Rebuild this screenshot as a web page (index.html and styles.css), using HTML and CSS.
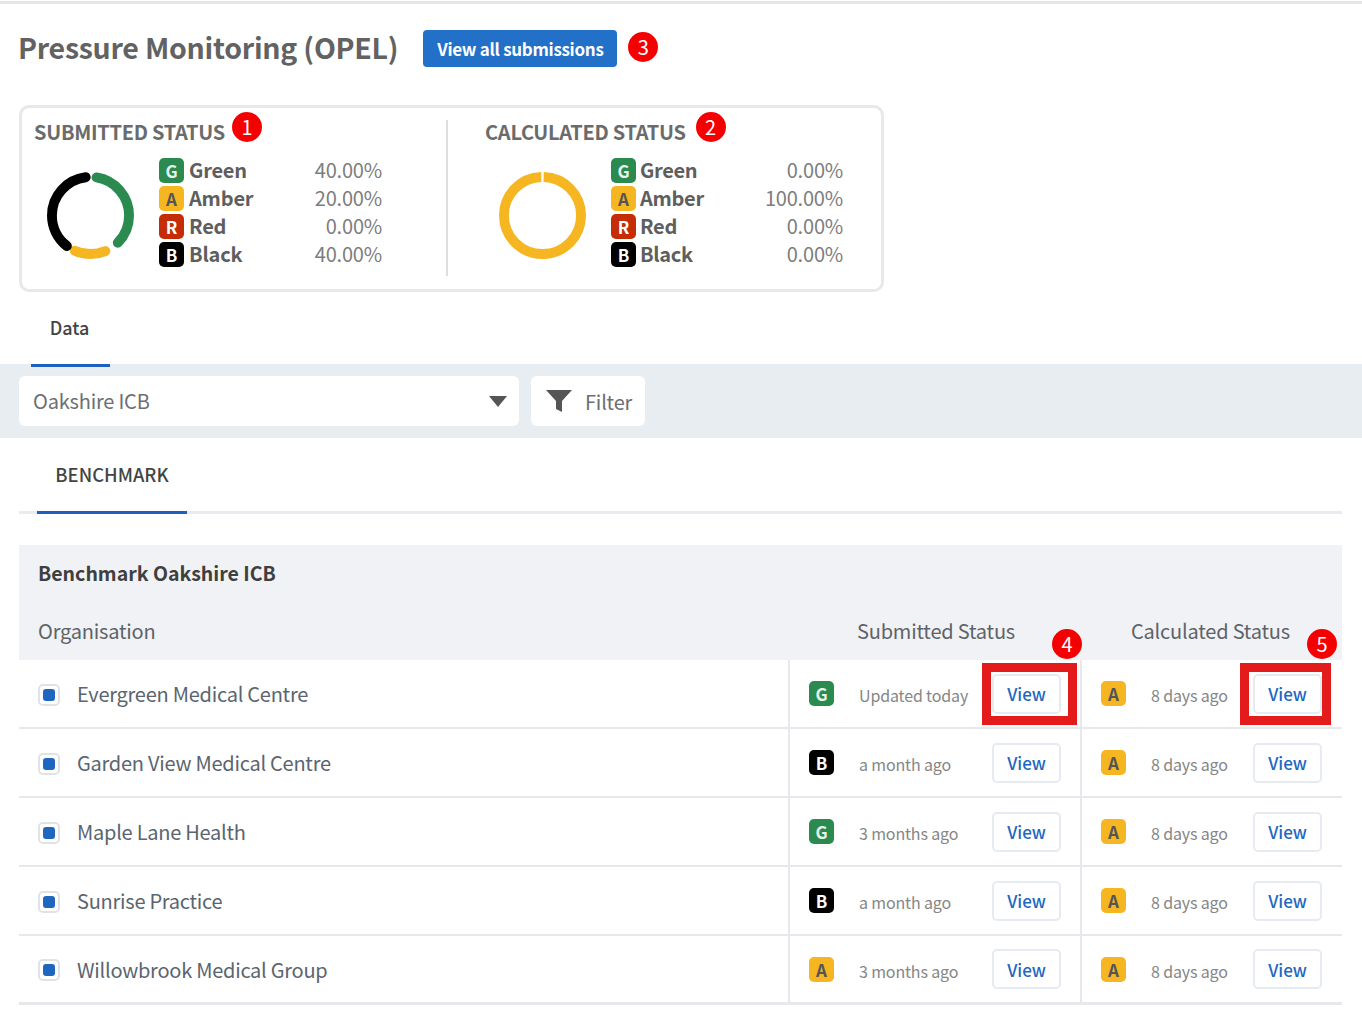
FILE: index.html
```html
<!DOCTYPE html>
<html lang="en">
<head>
<meta charset="utf-8">
<title>Pressure Monitoring (OPEL)</title>
<link rel="stylesheet" href="styles.css">
</head>
<body>
<main class="page">
  <header class="head">
    <h1 class="title">Pressure Monitoring (OPEL)</h1>
    <a class="primary">View all submissions</a>
    <span class="pin">3</span>
  </header>

  <section class="card">
    <div class="stat stat-a">
      <h2 class="stat-title">SUBMITTED STATUS<span class="pin pin-title">1</span></h2>
      <div class="stat-body">
        <svg class="donut" viewBox="0 0 88 88">
          <g transform="rotate(-90 44 44)" fill="none" stroke-width="10" stroke-linecap="round">
            <circle cx="44" cy="44" r="39" pathLength="100" stroke="#2a8a4f" stroke-dasharray="35 65" stroke-dashoffset="-2.5"/>
            <circle cx="44" cy="44" r="39" pathLength="100" stroke="#f6b622" stroke-dasharray="13 87" stroke-dashoffset="-43.7"/>
            <circle cx="44" cy="44" r="39" pathLength="100" stroke="#000" stroke-dasharray="37.5 62.5" stroke-dashoffset="-60.5"/>
          </g>
        </svg>
        <ul class="legend legend-a">
          <li><span class="rag g">G</span><b>Green</b><i>40.00%</i></li>
          <li><span class="rag a">A</span><b>Amber</b><i>20.00%</i></li>
          <li><span class="rag r">R</span><b>Red</b><i>0.00%</i></li>
          <li><span class="rag k">B</span><b>Black</b><i>40.00%</i></li>
        </ul>
      </div>
    </div>
    <div class="stat stat-b">
      <h2 class="stat-title">CALCULATED STATUS<span class="pin pin-title">2</span></h2>
      <div class="stat-body">
        <svg class="donut" viewBox="0 0 88 88">
          <g transform="rotate(-90 44 44)" fill="none" stroke-width="10">
            <circle cx="44" cy="44" r="39" pathLength="100" stroke="#f6b622" stroke-dasharray="99 1" stroke-dashoffset="-0.5"/>
          </g>
        </svg>
        <ul class="legend legend-b">
          <li><span class="rag g">G</span><b>Green</b><i>0.00%</i></li>
          <li><span class="rag a">A</span><b>Amber</b><i>100.00%</i></li>
          <li><span class="rag r">R</span><b>Red</b><i>0.00%</i></li>
          <li><span class="rag k">B</span><b>Black</b><i>0.00%</i></li>
        </ul>
      </div>
    </div>
  </section>

  <nav class="tabs"><a class="tab">Data</a></nav>

  <div class="toolbar">
    <div class="select">
      <span>Oakshire ICB</span>
      <svg class="caret" viewBox="0 0 18 12"><path d="M0 1h18L9 12z"/></svg>
    </div>
    <div class="filter">
      <svg class="funnel" viewBox="0 0 26 22"><path d="M0 0h26L16 11v11l-6-3v-8z"/></svg>
      <span>Filter</span>
    </div>
  </div>

  <div class="subtabs"><a class="subtab">BENCHMARK</a></div>

  <section class="panel">
    <div class="panel-head">
      <h3 class="panel-title">Benchmark Oakshire ICB</h3>
      <div class="cols">
        <div class="col-org">Organisation</div>
        <div class="col-sub">Submitted Status</div>
        <div class="col-calc">Calculated Status</div>
      </div>
    </div>

    <div class="row">
      <div class="org"><span class="check"></span>Evergreen Medical Centre</div>
      <div class="cell cell-sub"><span class="rag g">G</span><span class="when">Updated today</span><span class="view-wrap"><a class="view">View</a><span class="mark mark-a"><span class="pin pin-mark">4</span></span></span></div>
      <div class="cell cell-calc"><span class="rag a">A</span><span class="when">8 days ago</span><span class="view-wrap"><a class="view">View</a><span class="mark mark-b"><span class="pin pin-mark">5</span></span></span></div>
    </div>
    <div class="row">
      <div class="org"><span class="check"></span>Garden View Medical Centre</div>
      <div class="cell cell-sub"><span class="rag k">B</span><span class="when">a month ago</span><a class="view">View</a></div>
      <div class="cell cell-calc"><span class="rag a">A</span><span class="when">8 days ago</span><a class="view">View</a></div>
    </div>
    <div class="row">
      <div class="org"><span class="check"></span>Maple Lane Health</div>
      <div class="cell cell-sub"><span class="rag g">G</span><span class="when">3 months ago</span><a class="view">View</a></div>
      <div class="cell cell-calc"><span class="rag a">A</span><span class="when">8 days ago</span><a class="view">View</a></div>
    </div>
    <div class="row">
      <div class="org"><span class="check"></span>Sunrise Practice</div>
      <div class="cell cell-sub"><span class="rag k">B</span><span class="when">a month ago</span><a class="view">View</a></div>
      <div class="cell cell-calc"><span class="rag a">A</span><span class="when">8 days ago</span><a class="view">View</a></div>
    </div>
    <div class="row row-last">
      <div class="org"><span class="check"></span>Willowbrook Medical Group</div>
      <div class="cell cell-sub"><span class="rag a">A</span><span class="when">3 months ago</span><a class="view">View</a></div>
      <div class="cell cell-calc"><span class="rag a">A</span><span class="when">8 days ago</span><a class="view">View</a></div>
    </div>
  </section>
</main>
</body>
</html>
```
FILE: styles.css
```css
* { box-sizing: border-box; }
html, body { margin: 0; padding: 0; background: #fff; }
body {
  font-family: "Noto Sans CJK SC", "Noto Sans", sans-serif;
  color: #5f6368;
  overflow: hidden;
}
.page { border-top: 3px solid #e6e6e6; margin-top: 1px; height: 1017px; }

.pin {
  display: inline-flex; align-items: center; justify-content: center;
  width: 30px; height: 30px; border-radius: 50%;
  background: #f50000; color: #fff;
  font-size: 20px; font-weight: 400; line-height: 1;
}

.head { display: flex; align-items: center; height: 87px; padding: 0 19px 0 18px; }
.title { margin: -2px 0 0; font-size: 28.5px; line-height: 40px; font-weight: 700; color: #626262; letter-spacing: -.25px; white-space: nowrap; }
.primary {
  margin: 2px 0 0 25px; width: 194px; height: 37px; display: flex; align-items: center; justify-content: center;
  background: #2270c8; color: #fff; border-radius: 4px;
  font-size: 17px; font-weight: 700; letter-spacing: -.3px;
}
.head .pin { margin: -2px 0 0 11px; }

.card {
  margin: 14px 0 0 19px; width: 865px; height: 187px;
  border: 3px solid #e8e8e8; border-radius: 10px;
  display: flex; padding-top: 12px;
}
.stat { height: 156px; }
.stat-a { width: 426px; padding-left: 12px; border-right: 2px solid #dedede; }
.stat-b { flex: 1; padding-left: 37px; }
.stat-title {
  margin: -1px 0 0; height: 26px; font-size: 20px; line-height: 26px; font-weight: 700; color: #6b6b6b;
  letter-spacing: -.28px;
  display: flex; align-items: center;
}
.pin-title { margin-left: 7px; margin-top: -10px; letter-spacing: 0; }
.stat-b .pin-title { margin-left: 10px; }
.stat-body { display: flex; margin-top: 11px; }
.donut { width: 87px; height: 87px; margin: 16px 0 0 13px; flex: none; }
.stat-b .donut { margin-left: 14px; }
.legend { list-style: none; margin: 0 0 0 25px; padding: 0; }
.legend li { display: flex; align-items: center; height: 28px; font-size: 20px; }
.legend b { font-weight: 700; color: #5e5e5e; margin: 0 0 2px 5px; letter-spacing: -.2px; }
.legend-b b { margin-left: 4px; letter-spacing: -.3px; }
.legend i { font-style: normal; color: #7d7d7d; margin: 0 0 2px auto; letter-spacing: -.2px; }
.legend-a { width: 223px; }
.legend-b { width: 232px; }

.rag {
  display: inline-flex; align-items: center; justify-content: center; flex: none;
  width: 25px; height: 25px; border-radius: 5px;
  font-size: 17px; font-weight: 700; line-height: 1; color: #fff;
}
.rag.g { background: #2a8a4f; color: #e6f3ea; }
.rag.a { background: #f6b622; color: #555; }
.rag.r { background: #c42d06; }
.rag.k { background: #000; }

.tabs { height: 72px; padding-left: 31px; }
.tab {
  display: flex; justify-content: center; width: 79px; height: 75px; padding: 20px 2px 0 0;
  font-size: 18px; line-height: 30px; font-weight: 500; color: #444;
  border-bottom: 3px solid #1f5fbf; position: relative; z-index: 1;
}

.toolbar {
  height: 74px; background: #e8edf1; padding: 12px 19px;
  display: flex; gap: 12px;
}
.select, .filter { background: #fff; border-radius: 6px; height: 50px; display: flex; align-items: center; font-size: 20px; letter-spacing: -.2px; color: #6b6f75; }
.select { width: 500px; padding: 0 12px 2px 14px; justify-content: space-between; }
.caret { width: 18px; height: 12px; fill: #555; margin-top: 2px; }
.filter { width: 114px; padding-left: 15px; gap: 13px; }
.funnel { width: 26px; height: 22px; fill: #555; }

.subtabs { margin: 0 20px 0 19px; height: 76px; border-bottom: 3px solid #e8ecf0; padding-left: 18px; }
.subtab {
  display: flex; justify-content: center; width: 150px; height: 76px; padding-top: 21px;
  font-size: 18.4px; line-height: 30px; font-weight: 500; color: #444;
  border-bottom: 3px solid #1f5fbf;
}

.panel { margin: 31px 20px 0 19px; }
.panel-head { background: #f0f2f5; height: 115px; padding-top: 13px; }
.panel-title { margin: 0; padding-left: 19px; font-size: 19.5px; line-height: 30px; font-weight: 700; color: #3f3f3f; }
.cols { display: flex; margin-top: 28px; font-size: 20px; letter-spacing: -.2px; line-height: 30px; color: #5f6368; }
.col-org { width: 838px; padding-left: 19px; }
.col-sub { width: 274px; }

.row { display: flex; height: 69px; border-bottom: 2px solid #e6e8eb; }
.row-last { border-bottom-width: 3px; }
.org { width: 771px; padding: 0 0 0 19px; display: flex; align-items: center; font-size: 20px; letter-spacing: -.25px; color: #5a6570; border-right: 2px solid #e6e8eb; }
.check {
  width: 22px; height: 22px; flex: none; margin: 2px 17px 0 0;
  border: 2px solid #dfe3e8; border-radius: 5px; padding: 3px;
}
.check::before { content: ""; display: block; width: 12px; height: 12px; border-radius: 3px; background: #1f66c1; }
.cell { display: flex; align-items: center; padding: 0 20px; }
.cell-sub { width: 292px; border-right: 2px solid #e6e8eb; padding: 0 19px; }
.cell-calc { flex: 1; padding-left: 19px; }
.when { margin: 3px 0 0 25px; font-size: 16px; letter-spacing: -.15px; color: #868686; white-space: nowrap; }
.view, .view-wrap { margin-left: auto; }
.view {
  width: 69px; height: 40px; display: flex; align-items: center; justify-content: center;
  border: 2px solid #e6ebf1; border-radius: 5px; background: #fff;
  color: #2268c0; font-size: 17px; font-weight: 500;
}
.view-wrap { position: relative; display: block; }
.view-wrap .view { margin-left: 0; }
.mark { position: absolute; border: 9px solid #e31b1b; top: -11px; height: 62px; }
.mark-a { left: -10px; width: 95px; }
.mark-b { left: -13px; width: 91px; }
.pin-mark { position: absolute; top: -43px; right: -15px; }
.mark-a .pin-mark { right: -14px; }
```
